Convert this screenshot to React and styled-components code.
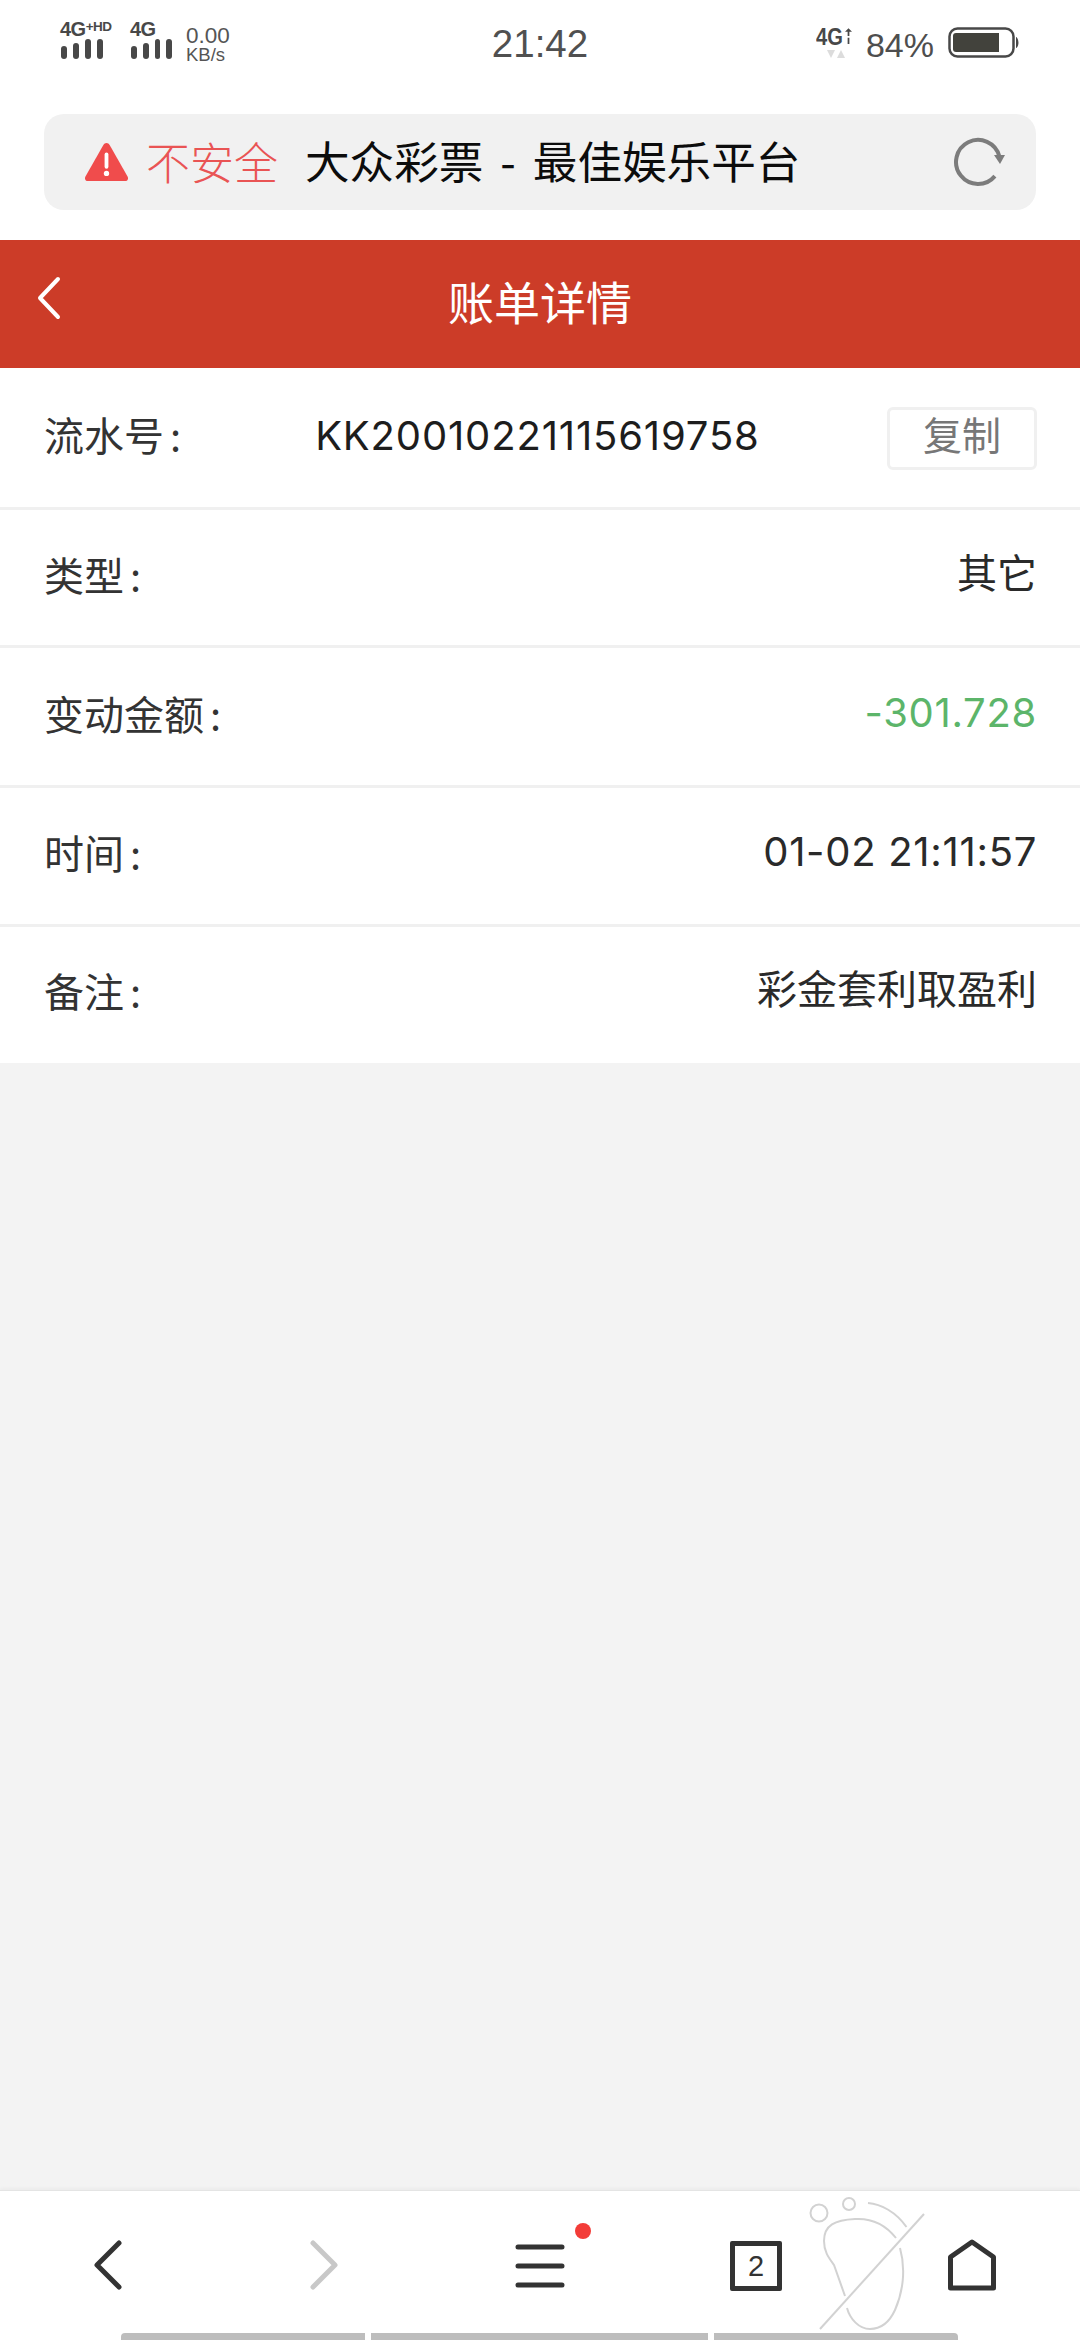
import React from "react";
import styled, { createGlobalStyle } from "styled-components";

const GlobalStyle = createGlobalStyle`
  html, body {
    margin: 0;
    padding: 0;
    background: #f3f3f3;
  }
  body {
    font-family: "Inter", "Noto Sans CJK SC", sans-serif;
  }
`;

const Page = styled.div`
  width: 1080px;
  height: 2340px;
  display: flex;
  flex-direction: column;
  overflow: hidden;
  background: #f3f3f3;
  position: relative;
`;

const StatusBar = styled.div`
  height: 114px;
  background: #fff;
  display: grid;
  grid-template-columns: 1fr auto 1fr;
  align-items: start;
  padding: 0 60px;
  box-sizing: border-box;
  color: #4a4a4a;
`;

const StatusLeft = styled.div`
  display: flex;
  gap: 12px;
  padding-top: 21px;
`;

const SignalGroup = styled.div`
  display: flex;
  flex-direction: column;
  width: ${(p) => p.$w}px;
`;

const SignalLabel = styled.span`
  font: 700 20px/17px "Liberation Sans", sans-serif;
  height: 17px;
  white-space: nowrap;
  color: #484848;
  letter-spacing: -0.5px;
  sup {
    font-size: 13.5px;
    line-height: 12px;
    vertical-align: top;
    margin-left: 0;
  }
`;

const Bars = styled.div`
  display: flex;
  gap: 6px;
  align-items: flex-end;
  height: 21px;
  margin-left: 1px;
`;

const Bar = styled.i`
  display: block;
  width: 6px;
  border-radius: 3px;
  background: #484848;
  height: ${(p) => p.$h}px;
`;

const Speed = styled.div`
  display: flex;
  flex-direction: column;
  font-family: "Liberation Sans", sans-serif;
  color: #555;
  margin-left: 2px;
  margin-top: 5px;
`;

const SpeedValue = styled.span`
  font-size: 22.5px;
  line-height: 20px;
`;

const SpeedUnit = styled.span`
  font-size: 18.5px;
  line-height: 17px;
`;

const Clock = styled.div`
  font: 400 38.5px/44px "Liberation Sans", sans-serif;
  padding-top: 22px;
  color: #505050;
`;

const StatusRight = styled.div`
  display: flex;
  justify-content: flex-end;
  align-items: flex-start;
  padding-top: 27px;
`;

const NetBlock = styled.div`
  width: 36px;
  margin-right: 14px;
  display: flex;
  flex-direction: column;
`;

const NetTop = styled.div`
  display: flex;
  height: 20px;
  align-items: flex-start;
`;

const NetLabel = styled.span`
  display: block;
  width: 29px;
  font: 700 24px/20px "Liberation Sans", sans-serif;
  color: #484848;
  white-space: nowrap;
  transform: scaleX(0.84);
  transform-origin: left center;
`;

const NetTriangles = styled.svg`
  margin: 2px 0 0 11px;
`;

const Percent = styled.span`
  font: 400 34px/36px "Liberation Sans", sans-serif;
  color: #4e4e4e;
  margin-right: 14px;
`;

const UrlWrap = styled.div`
  height: 126px;
  background: #fff;
  padding: 0 44px 30px 44px;
  box-sizing: border-box;
`;

const UrlBar = styled.div`
  height: 96px;
  border-radius: 20px;
  background: #f1f1f1;
  display: flex;
  align-items: center;
  padding: 0 31px 0 40px;
`;

const Insecure = styled.span`
  font: 300 44px/1 "Noto Sans CJK SC", sans-serif;
  color: #e95454;
  margin-left: 17px;
  padding-bottom: 3px;
`;

const PageTitle = styled.span`
  font: 400 44.6px/1 "Noto Sans CJK SC", sans-serif;
  color: #0c0c0c;
  margin-left: 27px;
  padding-bottom: 3px;
  flex: 1;
  word-spacing: 7px;
  white-space: nowrap;
`;

const Header = styled.div`
  height: 128px;
  background: #cc3c28;
  display: flex;
  align-items: center;
  justify-content: center;
  position: relative;
`;

const HeaderBack = styled.div`
  position: absolute;
  left: 35px;
  top: 36px;
  line-height: 0;
`;

const HeaderTitle = styled.div`
  font: 400 46px/1 "Noto Sans CJK SC", sans-serif;
  color: #fff;
  padding-bottom: 8px;
`;

const List = styled.div`
  background: #fff;
`;

const Row = styled.div`
  height: ${(p) => p.$h}px;
  box-sizing: border-box;
  display: flex;
  align-items: center;
  justify-content: space-between;
  padding: 0 43px ${(p) => (p.$last ? 10 : 8)}px 44px;
  border-bottom: ${(p) => (p.$last ? "none" : "3px solid #f0f0f0")};
`;

const Label = styled.span`
  font: 400 40px/1 "Noto Sans CJK SC", sans-serif;
  color: #333;
`;

const Colon = styled.span`
  margin-left: 6px;
`;

const Value = styled.span`
  font: 400 40px/1 "Inter", "Noto Sans CJK SC", sans-serif;
  color: ${(p) => p.$color || "#2a2a2a"};
  letter-spacing: ${(p) => (p.$cjk ? "0" : "0.7px")};
  white-space: nowrap;
`;

const SerialValue = styled(Value)`
  flex: 1;
  text-align: left;
  margin-left: 134px;
  margin-top: 5px;
  color: #1d1d1d;
  letter-spacing: 0.85px;
`;

const CopyButton = styled.button`
  width: 150px;
  height: 63px;
  box-sizing: border-box;
  margin-top: 10px;
  border: 3px solid #f0f0f0;
  border-radius: 6px;
  background: #fff;
  color: #777;
  font: 400 39px/1 "Noto Sans CJK SC", sans-serif;
  padding: 0 0 10px;
`;

const Filler = styled.div`
  flex: 1;
  background: #f3f3f3;
`;

const BottomNav = styled.div`
  height: 150px;
  background: #fff;
  border-top: 1px solid #e4e4e4;
  box-shadow: 0 -2px 3px rgba(0, 0, 0, 0.03);
  box-sizing: border-box;
  position: relative;
  display: grid;
  grid-template-columns: repeat(5, 216px);
  align-items: start;
`;

const NavItem = styled.div`
  display: flex;
  justify-content: center;
  padding-top: 48px;
  line-height: 0;
  position: relative;
`;

const RedDot = styled.i`
  position: absolute;
  top: 32px;
  left: 143px;
  width: 16px;
  height: 16px;
  border-radius: 50%;
  background: #f33c38;
`;

const TabCount = styled.div`
  width: 52px;
  height: 50px;
  margin-top: 2px;
  box-sizing: border-box;
  border: 5px solid #333;
  border-radius: 2px;
  font: 400 29px/40px "Liberation Sans", sans-serif;
  color: #333;
  text-align: center;
`;

const Footprint = styled.svg`
  position: absolute;
  left: 809px;
  top: 2197px;
`;

const ScrollTrack = styled.div`
  position: absolute;
  left: 121px;
  bottom: 0;
  height: 7px;
  display: flex;
  gap: 6px;
`;

const ScrollPiece = styled.i`
  display: block;
  height: 7px;
  width: ${(p) => p.$w}px;
  background: #bdbdbd;
  border-radius: ${(p) => p.$radius || "0"};
`;

const rows = [
  { label: "类型", value: "其它", h: 138, cjk: true },
  { label: "变动金额", value: "-301.728", color: "#5cb56a", h: 140 },
  { label: "时间", value: "01-02 21:11:57", h: 139 },
  { label: "备注", value: "彩金套利取盈利", h: 136, last: true, cjk: true },
];

const SignalBars = () => (
  <Bars>
    <Bar $h={13} />
    <Bar $h={16} />
    <Bar $h={20} />
    <Bar $h={20} />
  </Bars>
);

export default function App() {
  return (
    <Page>
      <GlobalStyle />
      <StatusBar>
        <StatusLeft>
          <SignalGroup $w={58}>
            <SignalLabel>4G<sup>+HD</sup></SignalLabel>
            <SignalBars />
          </SignalGroup>
          <SignalGroup $w={42}>
            <SignalLabel>4G</SignalLabel>
            <SignalBars />
          </SignalGroup>
          <Speed>
            <SpeedValue>0.00</SpeedValue>
            <SpeedUnit>KB/s</SpeedUnit>
          </Speed>
        </StatusLeft>
        <Clock>21:42</Clock>
        <StatusRight>
          <NetBlock>
            <NetTop>
              <NetLabel>4G</NetLabel>
              <svg width="8" height="18" viewBox="0 0 8 18">
                <path d="M4 0L8 4H5V9H3V4H0zM3 11h2v7H3z" fill="#484848" />
              </svg>
            </NetTop>
            <NetTriangles width="18" height="10" viewBox="0 0 18 10">
              <path d="M0 1h8L4 9zM10 9h8l-4-8z" fill="#dcdcdc" />
            </NetTriangles>
          </NetBlock>
          <Percent>84%</Percent>
          <svg width="72" height="31" viewBox="0 0 72 31">
            <rect x="1.500" y="1.500" width="64" height="28" rx="8" fill="none" stroke="#484848" strokeWidth="2.500" />
            <path d="M8 6h43v19H8a3 3 0 0 1-3-3V9a3 3 0 0 1 3-3z" fill="#42423c" />
            <path d="M68 10c3 1 3.500 10 0 11z" fill="#484848" />
          </svg>
        </StatusRight>
      </StatusBar>

      <UrlWrap>
        <UrlBar>
          <svg width="45" height="40" viewBox="0 0 46 42">
            <path d="M23 1c1.500 0 2.500.8 3.300 2.200l18.800 33c1.200 2.200.2 4.800-2.500 4.800H3.400C.7 41-.3 38.400.9 36.200l18.800-33C20.500 1.800 21.500 1 23 1z" fill="#f04c4c" />
            <rect x="21" y="11" width="4" height="17" rx="2" fill="#fff" />
            <circle cx="23" cy="33" r="2.800" fill="#fff" />
          </svg>
          <Insecure>不安全</Insecure>
          <PageTitle>大众彩票 - 最佳娱乐平台</PageTitle>
          <svg width="52" height="50" viewBox="0 0 52 50">
            <path d="M41.900 39.100A22 22 0 1 1 46.300 19.300" fill="none" stroke="#7c7c7c" strokeWidth="4" />
            <path d="M41 18h11l-5 9z" fill="#7c7c7c" />
          </svg>
        </UrlBar>
      </UrlWrap>

      <Header>
        <HeaderBack>
          <svg width="26" height="44" viewBox="0 0 26 44">
            <path d="M23 3L5 22l18 19" fill="none" stroke="#fff" strokeWidth="4" strokeLinecap="round" strokeLinejoin="round" />
          </svg>
        </HeaderBack>
        <HeaderTitle>账单详情</HeaderTitle>
      </Header>

      <List>
        <Row $h={142}>
          <Label>流水号<Colon>:</Colon></Label>
          <SerialValue>KK20010221115619758</SerialValue>
          <CopyButton>复制</CopyButton>
        </Row>
        {rows.map((r) => (
          <Row key={r.label} $h={r.h} $last={r.last}>
            <Label>{r.label}<Colon>:</Colon></Label>
            <Value $color={r.color} $cjk={r.cjk}>{r.value}</Value>
          </Row>
        ))}
      </List>

      <Filler />

      <BottomNav>
        <NavItem>
          <svg width="30" height="52" viewBox="0 0 30 52">
            <path d="M26 4L4 26l22 22" fill="none" stroke="#333" strokeWidth="5" strokeLinecap="round" strokeLinejoin="round" />
          </svg>
        </NavItem>
        <NavItem>
          <svg width="30" height="52" viewBox="0 0 30 52">
            <path d="M4 4l22 22L4 48" fill="none" stroke="#c8c8c8" strokeWidth="5" strokeLinecap="round" strokeLinejoin="round" />
          </svg>
        </NavItem>
        <NavItem>
          <svg width="54" height="52" viewBox="0 0 54 52">
            <path d="M5 8h44M5 27h44M5 46h44" fill="none" stroke="#333" strokeWidth="5" strokeLinecap="round" />
          </svg>
          <RedDot />
        </NavItem>
        <NavItem>
          <TabCount>2</TabCount>
        </NavItem>
        <NavItem>
          <svg width="48" height="52" viewBox="0 0 48 52">
            <path d="M24 3L2.500 18v31h43V18z" fill="none" stroke="#333" strokeWidth="5" strokeLinejoin="round" />
          </svg>
        </NavItem>
      </BottomNav>

      <Footprint width="118" height="136" viewBox="0 0 118 136" fill="none" stroke="#d2d2d2" strokeWidth="2">
        <circle cx="10" cy="16" r="8.500" />
        <circle cx="40" cy="7" r="6" />
        <path d="M59 6C72 7 87 15 97.500 30" />
        <path d="M87 41C76 27 62 21 46 22C26 23 15 28 15 44C15 55 20 61 25 68L36 99" />
        <path d="M91 51C97 72 94 95 86 113C80 126 72 132 61 132C50 132 41 122 38 111" />
        <path d="M115 17L11 132" />
      </Footprint>

      <ScrollTrack>
        <ScrollPiece $w={244} $radius="4px 0 0 0" />
        <ScrollPiece $w={337} />
        <ScrollPiece $w={244} $radius="0 4px 0 0" />
      </ScrollTrack>
    </Page>
  );
}
